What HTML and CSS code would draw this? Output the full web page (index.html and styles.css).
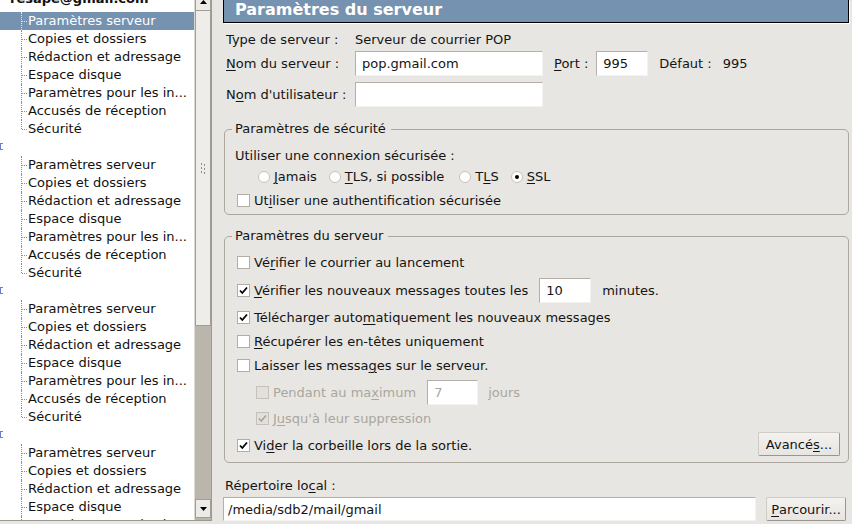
FILE: index.html
```html
<!DOCTYPE html>
<html lang="fr">
<head>
<meta charset="utf-8">
<title>Paramètres du serveur</title>
<link rel="stylesheet" href="styles.css">
</head>
<body>
<div class="window">
  <div class="sidebar">
    <div class="tree">
      <div class="tree-inner">
        <div class="row acct named">resape@gmail.com</div>
        <div class="row child sel">Paramètres serveur</div>
        <div class="row child">Copies et dossiers</div>
        <div class="row child">Rédaction et adressage</div>
        <div class="row child">Espace disque</div>
        <div class="row child">Paramètres pour les in...</div>
        <div class="row child">Accusés de réception</div>
        <div class="row child last">Sécurité</div>

        <div class="row acct"><svg class="frag" width="4" height="7" viewBox="0 0 4 7"><path d="M0 0h3v1H1v5h2v1H0z" fill="#6d7bd8"/></svg></div>
        <div class="row child">Paramètres serveur</div>
        <div class="row child">Copies et dossiers</div>
        <div class="row child">Rédaction et adressage</div>
        <div class="row child">Espace disque</div>
        <div class="row child">Paramètres pour les in...</div>
        <div class="row child">Accusés de réception</div>
        <div class="row child last">Sécurité</div>

        <div class="row acct"><svg class="frag" width="4" height="7" viewBox="0 0 4 7"><path d="M0 0h3v1H1v5h2v1H0z" fill="#6d7bd8"/></svg></div>
        <div class="row child">Paramètres serveur</div>
        <div class="row child">Copies et dossiers</div>
        <div class="row child">Rédaction et adressage</div>
        <div class="row child">Espace disque</div>
        <div class="row child">Paramètres pour les in...</div>
        <div class="row child">Accusés de réception</div>
        <div class="row child last">Sécurité</div>

        <div class="row acct"><svg class="frag" width="4" height="7" viewBox="0 0 4 7"><path d="M0 0h3v1H1v5h2v1H0z" fill="#6d7bd8"/></svg></div>
        <div class="row child">Paramètres serveur</div>
        <div class="row child">Copies et dossiers</div>
        <div class="row child">Rédaction et adressage</div>
        <div class="row child">Espace disque</div>
        <div class="row child">Paramètres pour les in...</div>
        <div class="row child">Accusés de réception</div>
        <div class="row child last">Sécurité</div>
      </div>
    </div>
    <div class="vscroll">
      <div class="sbtn up"><svg width="7" height="4" viewBox="0 0 7 4"><path d="M0 4L3.5 0L7 4z" fill="#000"/></svg></div>
      <div class="thumb">
        <svg width="5" height="11" viewBox="0 0 5 11"><g fill="#8f8b83"><rect x="0" y="0" width="1" height="2"/><rect x="3" y="1" width="1" height="2"/><rect x="0" y="4" width="1" height="2"/><rect x="3" y="5" width="1" height="2"/><rect x="0" y="8" width="1" height="2"/><rect x="3" y="9" width="1" height="2"/></g></svg>
      </div>
      <div class="trough"></div>
      <div class="sbtn down"><svg width="7" height="4" viewBox="0 0 7 4"><path d="M0 0L7 0L3.5 4z" fill="#000"/></svg></div>
    </div>
  </div>

  <div class="main">
    <div class="header">Paramètres du serveur</div>

    <div class="form">
      <div class="frow r1">
        <span class="flabel">Type de serveur :</span>
        <span>Serveur de courrier POP</span>
      </div>
      <div class="frow r2">
        <span class="flabel"><u>N</u>om du serveur :</span>
        <div class="input server">pop.gmail.com</div>
        <span class="port-label"><u>P</u>ort :</span>
        <div class="input port">995</div>
        <span class="def-label">Défaut :</span>
        <span class="def-val">995</span>
      </div>
      <div class="frow r3">
        <span class="flabel">N<u>o</u>m d'utilisateur :</span>
        <div class="input server"></div>
      </div>
    </div>

    <fieldset class="group sec">
      <legend>Paramètres de sécurité</legend>
      <div class="lrow">Utiliser une connexion sécurisée :</div>
      <div class="radios">
        <span class="ritem"><span class="radio"></span><span><u>J</u>amais</span></span>
        <span class="ritem"><span class="radio"></span><span><u>T</u>LS, si possible</span></span>
        <span class="ritem third"><span class="radio"></span><span>T<u>L</u>S</span></span>
        <span class="ritem"><span class="radio on"></span><span><u>S</u>SL</span></span>
      </div>
      <div class="cbrow auth"><span class="cb"></span><span>Ut<u>i</u>liser une authentification sécurisée</span></div>
    </fieldset>

    <fieldset class="group srv">
      <legend>Paramètres du serveur</legend>
      <div class="cbrow s1"><span class="cb"></span><span>Vé<u>r</u>ifier le courrier au lancement</span></div>
      <div class="cbrow s2"><span class="cb"><svg width="11" height="11" viewBox="0 0 11 11"><path d="M2 5.5L4.3 8L9 2.5" stroke="#000" stroke-width="1.8" fill="none"/></svg></span><span><u>V</u>érifier les nouveaux messages toutes les</span><div class="input mins">10</div><span class="after">minutes.</span></div>
      <div class="cbrow s3"><span class="cb"><svg width="11" height="11" viewBox="0 0 11 11"><path d="M2 5.5L4.3 8L9 2.5" stroke="#000" stroke-width="1.8" fill="none"/></svg></span><span>Télécharger auto<u>m</u>atiquement les nouveaux messages</span></div>
      <div class="cbrow s4"><span class="cb"></span><span><u>R</u>écupérer les en-têtes uniquement</span></div>
      <div class="cbrow s5"><span class="cb"></span><span>Laisser les messa<u>g</u>es sur le serveur.</span></div>
      <div class="cbrow s6 sub dis"><span class="cb"></span><span>Pendant au ma<u>x</u>imum</span><div class="input days">7</div><span class="after">jours</span></div>
      <div class="cbrow s7 sub dis"><span class="cb"><svg width="11" height="11" viewBox="0 0 11 11"><path d="M2 5.5L4.3 8L9 2.5" stroke="#aaa69e" stroke-width="1.8" fill="none"/></svg></span><span>J<u>u</u>squ'à leur suppression</span></div>
      <div class="cbrow s8"><span class="cb"><svg width="11" height="11" viewBox="0 0 11 11"><path d="M2 5.5L4.3 8L9 2.5" stroke="#000" stroke-width="1.8" fill="none"/></svg></span><span>Vi<u>d</u>er la corbeille lors de la sortie.</span><div class="btn adv">Avancé<u>s</u>...</div></div>
    </fieldset>

    <div class="local-label">Répertoire lo<u>c</u>al :</div>
    <div class="local-row">
      <div class="input local">/media/sdb2/mail/gmail</div>
      <div class="btn browse"><u>P</u>arcourir...</div>
    </div>
  </div>
</div>
</body>
</html>
```

FILE: styles.css
```css
* { box-sizing: border-box; }
html, body { margin: 0; padding: 0; }
body {
  width: 852px;
  height: 524px;
  overflow: hidden;
  background: #e8e6e2;
  font-family: "DejaVu Sans", sans-serif;
  font-size: 13px;
  color: #141414;
}
u { text-decoration: underline; text-underline-offset: 2px; text-decoration-thickness: 1px; }

.window { display: flex; height: 524px; }

/* ---------- sidebar tree ---------- */
.sidebar {
  width: 212px;
  height: 521px;
  display: flex;
  border-right: 1px solid #9d9a92;
  border-bottom: 1px solid #9d9a92;
}
.tree { width: 194px; height: 100%; background: #fff; overflow: hidden; }
.tree-inner { margin-top: -6px; }
.row { height: 18px; line-height: 18px; white-space: nowrap; position: relative; color: #111; }
.acct { display: flex; align-items: center; }
.acct.named { padding-left: 10px; font-weight: bold; line-height: 10px; align-items: flex-start; }
.frag { display: block; margin-top: -2px; }
.child { padding-left: 28px; }
.child::before {
  content: "";
  position: absolute;
  left: 21px; top: 0; bottom: 0;
  border-left: 1px dotted #8c8c8c;
}
.child.last::before { bottom: 9px; }
.child::after {
  content: "";
  position: absolute;
  left: 22px; top: 9px;
  width: 5px;
  border-top: 1px dotted #8c8c8c;
}
.child.sel { background: #7592b1; color: #fff; }
.child.sel::before, .child.sel::after { border-color: #e6ebf2; }

.vscroll {
  width: 17px;
  display: flex;
  flex-direction: column;
  background: #bab6ac;
  border-left: 1px solid #dcd9d3;
}
.sbtn {
  background: #ecebe7;
  border: 1px solid #a29e96;
  display: flex;
  justify-content: center;
}
.sbtn.up { height: 11px; border-top: 0; align-items: flex-start; }
.thumb {
  height: 315px;
  background: #eeede9;
  border: 1px solid #a29e96;
  border-top: 0;
  display: flex;
  align-items: center;
  justify-content: center;
}
.trough { flex: 1; }
.sbtn.down { height: 19px; margin-bottom: 2px; align-items: center; }

/* ---------- main panel ---------- */
.main {
  width: 628px;
  margin-left: 11px;
  display: flex;
  flex-direction: column;
}
.header {
  height: 23px;
  margin-right: 2px;
  background: #7592b1;
  border: 1px solid #000;
  border-top: 0;
  box-shadow: 1px 1px 0 #fff;
  color: #fff;
  font-weight: bold;
  font-size: 16px;
  line-height: 20px;
  padding-left: 11px;
}

.form { margin-top: 6px; padding-left: 3px; display: flex; flex-direction: column; }
.frow { display: flex; align-items: center; }
.frow.r1 { height: 20px; }
.frow.r2 { height: 25px; margin-top: 2px; }
.frow.r3 { height: 25px; margin-top: 6px; }
.flabel { width: 129px; flex: none; }

.input {
  height: 25px;
  background: #fff;
  border: 1px solid;
  border-color: #b4b0a8 #f3f2ef #f3f2ef #b4b0a8;
  padding-left: 6px;
  display: flex;
  align-items: center;
  flex: none;
}
.input.server { width: 188px; }
.port-label { margin-left: 11px; }
.input.port { width: 52px; margin-left: 8px; }
.def-label { margin-left: 11px; }
.def-val { margin-left: 11px; }

.group {
  margin: 0 2px 0 1px;
  border: 1px solid #aca89f;
  border-radius: 5px;
  min-width: 0;
}
.group legend {
  padding: 0 5px 0 3px;
  line-height: 16px;
}
.sec { margin-top: 14px; padding: 8px 0 1px 10px; }
.sec legend { margin-left: -3px; }
.lrow { height: 21px; display: flex; align-items: center; }
.radios { height: 21px; display: flex; align-items: center; padding-left: 23px; gap: 12px; }
.ritem { display: flex; align-items: center; gap: 4px; }
.ritem.third { margin-left: 3px; }
.radio {
  width: 12px; height: 12px;
  border-radius: 50%;
  background: #fff;
  border: 1px solid #c6c3bc;
  display: flex;
  align-items: center;
  justify-content: center;
}
.radio.on::after {
  content: "";
  width: 4px; height: 4px;
  border-radius: 50%;
  background: #000;
}

.cbrow { display: flex; align-items: center; gap: 4px; }
.cb {
  width: 13px; height: 13px;
  flex: none;
  background: #fff;
  border: 1px solid #b2aea6;
  display: flex;
  align-items: center;
  justify-content: center;
}
.cb svg { display: block; }
.auth { height: 25px; margin: 1px 0 0 2px; }

.srv { margin-top: 13px; padding: 6px 0 1px 12px; }
.srv legend { margin-left: -5px; }
.s1 { height: 25px; }
.s2 { height: 30px; }
.s3 { height: 24px; }
.s4 { height: 24px; }
.s5 { height: 25px; }
.s6 { height: 28px; }
.s7 { height: 24px; }
.s8 { height: 31px; }
.sub { padding-left: 19px; }
.dis { color: #aaa69e; }
.dis .cb { background: #e2e0db; border-color: #c4c1ba; }
.input.mins { width: 52px; margin-left: 7px; }
.input.days { width: 51px; margin-left: 7px; color: #aaa69e; }
.after { margin-left: 7px; }
.s6 .after { margin-left: 6px; }

.btn {
  height: 24px;
  background: linear-gradient(#f3f2ef, #e7e5e1);
  border: 1px solid;
  border-color: #cfccc5 #9a968e #9a968e #cfccc5;
  border-radius: 2px;
  display: flex;
  align-items: center;
  justify-content: center;
  flex: none;
}
.btn.adv { width: 82px; margin-left: auto; margin-right: 8px; align-self: flex-start; margin-top: 2px; }

.local-label { margin-top: 13px; height: 20px; line-height: 20px; padding-left: 2px; }
.local-row { margin-top: 1px; display: flex; align-items: center; }
.input.local { width: 533px; height: 24px; padding-left: 4px; }
.btn.browse { width: 80px; margin-left: 10px; }
```
